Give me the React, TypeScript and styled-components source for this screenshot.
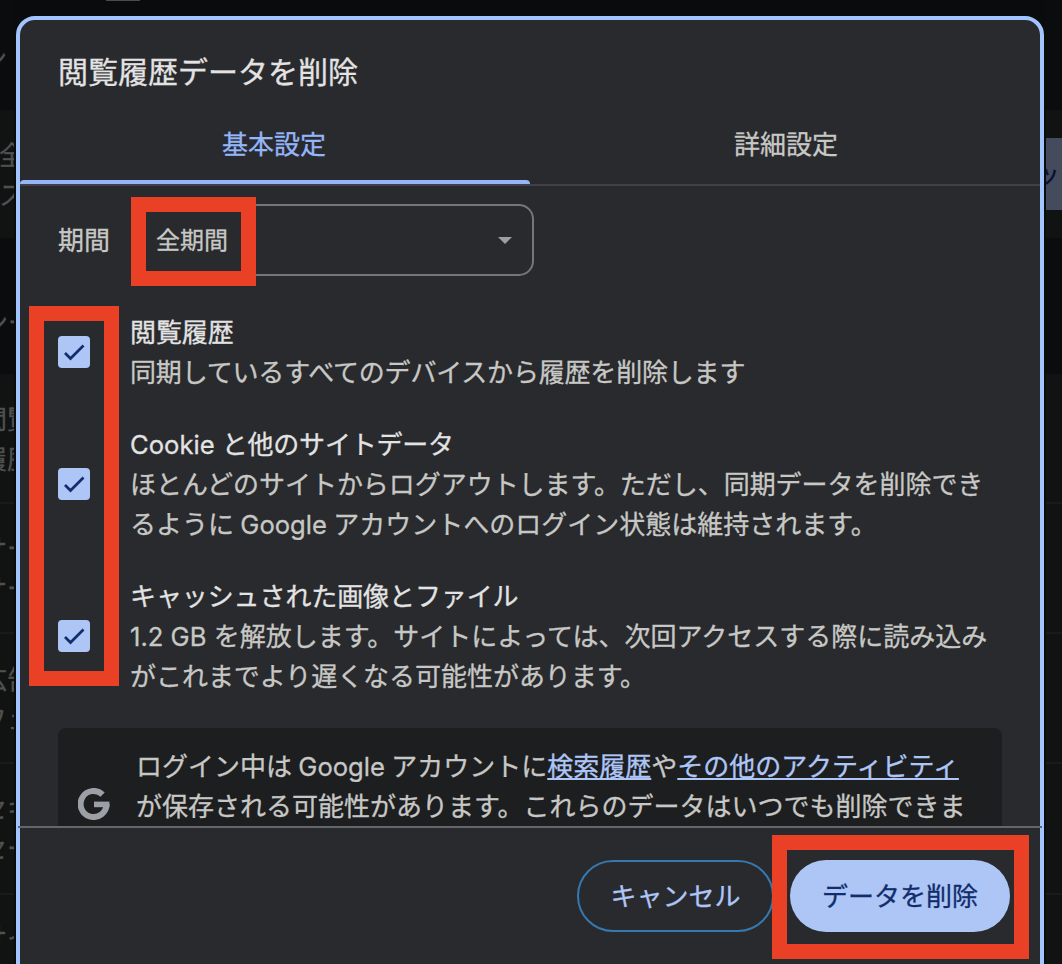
import React from "react";
import styled, { createGlobalStyle } from "styled-components";

const Global = createGlobalStyle`
  * { box-sizing: border-box; }
  body {
    margin: 0;
    background: #0b0c0e;
    font-family: Inter, "Noto Sans CJK JP", sans-serif;
    overflow: hidden;
    -webkit-text-stroke: 0.3px currentColor;
  }
`;

const Page = styled.div`
  display: grid;
  grid-template-columns: 14px 1fr 16px;
  column-gap: 2px;
  width: 1062px;
  height: 964px;
  overflow: hidden;
  background: #0a0b0c;
`;

const Strip = styled.div`
  display: flex;
  flex-direction: column;
  overflow: hidden;
  height: 964px;
  background: #0b0c0e;
`;

const Band = styled.div<{ $h: number; $card?: boolean; $line?: boolean; $top?: number }>`
  flex: none;
  height: ${(p) => p.$h}px;
  padding-top: ${(p) => p.$top ?? 0}px;
  background: ${(p) => (p.$card ? "#111212" : "#0b0c0e")};
  border-bottom: ${(p) => (p.$line ? "2px solid #191a1b" : "0")};
`;

const BackText = styled.div<{ $shift: number }>`
  margin-left: ${(p) => p.$shift}px;
  height: 40px;
  line-height: 42px;
  font-size: 26px;
  white-space: nowrap;
  color: #4f5050;
`;

const BackButton = styled.div`
  height: 72px;
  background: #434b5d;
  color: #07132e;
  font-size: 26px;
  line-height: 74px;
  white-space: nowrap;
  text-indent: -12px;
`;

const Middle = styled.div`
  height: 964px;
  padding-top: 16px;
  position: relative;
`;

const BackTab = styled.div`
  position: absolute;
  top: 0;
  left: 90px;
  width: 34px;
  height: 1px;
  background: #4a4b4d;
`;

const Dialog = styled.div`
  height: 980px;
  border: 4px solid #a2c5fe;
  border-radius: 19px;
  background: #292a2d;
`;

const Title = styled.h1`
  margin: 0;
  padding: 30px 38px 0;
  height: 86px;
  font-size: 30px;
  line-height: 45px;
  font-weight: 400;
  color: #e3e3e3;
`;

const Tabs = styled.div`
  display: grid;
  grid-template-columns: 510px 510px;
  height: 80px;
  border-bottom: 2px solid #404144;
`;

const Tab = styled.div<{ $active?: boolean }>`
  height: 78px;
  padding-top: 19px;
  text-align: center;
  text-indent: ${(p) => (p.$active ? -2 : 2)}px;
  font-size: 26px;
  line-height: 40px;
  color: ${(p) => (p.$active ? "#94b5f7" : "#c7c8c5")};
  &::after {
    content: "";
    display: ${(p) => (p.$active ? "block" : "none")};
    margin-top: 15px;
    height: 4px;
    border-radius: 4px 4px 0 0;
    background: #94b5f7;
  }
`;

const Body = styled.div`
  height: 640px;
  padding: 18px 38px 0;
  overflow: hidden;
`;

const RangeRow = styled.div`
  display: flex;
  align-items: center;
  height: 72px;
  color: #c7c8c5;
  font-size: 26px;
`;

const RangeLabel = styled.span`
  width: 74px;
  height: 40px;
  line-height: 42px;
`;

const Select = styled.div`
  display: flex;
  align-items: center;
  justify-content: space-between;
  width: 402px;
  height: 72px;
  padding: 0 20px 0 22px;
  border: 2px solid #757675;
  border-radius: 15px;
  font-size: 24px;
`;

const SelectValue = styled.span`
  height: 40px;
  line-height: 42px;
`;

const Options = styled.div`
  display: flex;
  flex-direction: column;
  gap: 32px;
  margin-top: 36px;
`;

const Option = styled.div`
  display: flex;
  align-items: center;
  gap: 40px;
`;

const CheckBox = styled.span`
  flex: none;
  width: 32px;
  height: 32px;
  border-radius: 4px;
  background: #aec6f6;
  svg { display: block; }
`;

const Line = styled.div<{ $strong?: boolean; $track?: number }>`
  height: 40px;
  line-height: 42px;
  font-size: 26px;
  white-space: nowrap;
  letter-spacing: ${(p) => p.$track ?? 0}px;
  color: ${(p) => (p.$strong ? "#e3e3e3" : "#c7c8c5")};
`;

const Latin = styled.span<{ $tight?: boolean }>`
  font-size: 25.6px;
  letter-spacing: 0;
  margin: 0 ${(p) => (p.$tight ? -1 : 0)}px;
`;

const Info = styled.div`
  display: flex;
  gap: 26px;
  margin-top: 32px;
  height: 156px;
  padding: 18px 20px;
  border-radius: 8px;
  background: #1d1e20;
  svg { flex: none; margin-top: 42px; }
`;

const Link = styled.a`
  color: #aec6f6;
  text-decoration: underline;
  text-decoration-thickness: 2px;
  text-underline-offset: 2px;
  text-decoration-skip-ink: none;
`;

const Footer = styled.div`
  display: flex;
  justify-content: flex-end;
  gap: 16px;
  margin: 0 -2px;
  padding: 32px 32px 0;
  border-top: 2px solid #65666a;
`;

const Button = styled.button<{ $primary?: boolean }>`
  width: ${(p) => (p.$primary ? 220 : 197)}px;
  height: 72px;
  padding: 2px 0 0;
  border: ${(p) => (p.$primary ? "0" : "2px solid #3579b0")};
  border-radius: 36px;
  background: ${(p) => (p.$primary ? "#aec6f6" : "transparent")};
  color: ${(p) => (p.$primary ? "#112d6c" : "#aec6f6")};
  font: 400 26px/40px Inter, "Noto Sans CJK JP", sans-serif;
`;

const Highlight = styled.div<{ $x: number; $y: number; $w: number; $h: number }>`
  position: absolute;
  left: ${(p) => p.$x}px;
  top: ${(p) => p.$y}px;
  width: ${(p) => p.$w}px;
  height: ${(p) => p.$h}px;
  border: 15px solid #ea4126;
`;

const Check = () => (
  <CheckBox>
    <svg width="32" height="32" viewBox="0 0 32 32" fill="none">
      <path d="M7 17L12.5 22.5L25.5 9.5" stroke="#112d6c" strokeWidth="2.7" />
    </svg>
  </CheckBox>
);

const GoogleMark = () => (
  <svg width="32" height="32" viewBox="0 0 32 32">
    <path
      fill="none"
      stroke="#9aa0a6"
      strokeWidth="6"
      d="M24.6 6.6A13 13 0 1 0 28.6 16"
    />
    <path fill="#9aa0a6" d="M16 13.6H31.4V19.2H16Z" />
  </svg>
);

export default function App() {
  return (
    <>
      <Global />
      <Page>
        <Strip>
          <Band $h={110} $top={38}><BackText $shift={-19}>ン</BackText></Band>
          <Band $h={128} $card $top={25}>
            <BackText $shift={-1}>全</BackText>
            <BackText $shift={-1}>ス</BackText>
          </Band>
          <Band $h={136} $top={64}><BackText $shift={-18}>ンー</BackText></Band>
          <Band $h={130} $card $line $top={25}>
            <BackText $shift={-19}>閲覧</BackText>
            <BackText $shift={-19}>履歴</BackText>
          </Band>
          <Band $h={130} $card $line $top={24}>
            <BackText $shift={-19}>サード</BackText>
            <BackText $shift={-19}>サード</BackText>
          </Band>
          <Band $h={130} $card $line $top={25}>
            <BackText $shift={-19}>広告</BackText>
            <BackText $shift={-19}>フェ</BackText>
          </Band>
          <Band $h={131} $card $line $top={24}>
            <BackText $shift={-19}>セキ</BackText>
            <BackText $shift={-19}>セー</BackText>
          </Band>
          <Band $h={69} $card $top={22}><BackText $shift={-19}>サイ</BackText></Band>
        </Strip>
        <Middle>
          <BackTab />
          <Dialog>
            <Title>閲覧履歴データを削除</Title>
            <Tabs>
              <Tab $active>基本設定</Tab>
              <Tab>詳細設定</Tab>
            </Tabs>
            <Body>
              <RangeRow>
                <RangeLabel>期間</RangeLabel>
                <Select>
                  <SelectValue>全期間</SelectValue>
                  <svg width="14" height="7" viewBox="0 0 14 7">
                    <path d="M0 0H14L7 7Z" fill="#9aa0a6" />
                  </svg>
                </Select>
              </RangeRow>
              <Options>
                <Option>
                  <Check />
                  <div>
                    <Line $strong $track={-0.1}>閲覧履歴</Line>
                    <Line $track={-0.18}>同期しているすべてのデバイスから履歴を削除します</Line>
                  </div>
                </Option>
                <Option>
                  <Check />
                  <div>
                    <Line $strong $track={-0.2}><Latin>Cookie</Latin> と他のサイトデータ</Line>
                    <Line $track={-0.04}>ほとんどのサイトからログアウトします。ただし、同期データを削除でき</Line>
                    <Line>るように <Latin $tight>Google</Latin> アカウントへのログイン状態は維持されます。</Line>
                  </div>
                </Option>
                <Option>
                  <Check />
                  <div>
                    <Line $strong $track={-0.1}>キャッシュされた画像とファイル</Line>
                    <Line><Latin>1.2 GB</Latin> を解放します。サイトによっては、次回アクセスする際に読み込み</Line>
                    <Line $track={-0.04}>がこれまでより遅くなる可能性があります。</Line>
                  </div>
                </Option>
              </Options>
              <Info>
                <GoogleMark />
                <div>
                  <Line>
                    ログイン中は <Latin $tight>Google</Latin> アカウントに<Link>検索履歴</Link>や<Link>その他のアクティビティ</Link>
                  </Line>
                  <Line>が保存される可能性があります。これらのデータはいつでも削除できま</Line>
                </div>
              </Info>
            </Body>
            <Footer>
              <Button>キャンセル</Button>
              <Button $primary>データを削除</Button>
            </Footer>
          </Dialog>
        </Middle>
        <Strip>
          <Band $h={110} />
          <Band $h={128} $card $top={28}><BackButton>ック</BackButton></Band>
          <Band $h={136} />
          <Band $h={130} $card $line />
          <Band $h={130} $card $line />
          <Band $h={130} $card $line />
          <Band $h={131} $card $line />
          <Band $h={69} $card />
        </Strip>
        <Highlight $x={131} $y={197} $w={125} $h={89} />
        <Highlight $x={29} $y={306} $w={90} $h={380} />
        <Highlight $x={772} $y={835} $w={257} $h={124} />
      </Page>
    </>
  );
}
